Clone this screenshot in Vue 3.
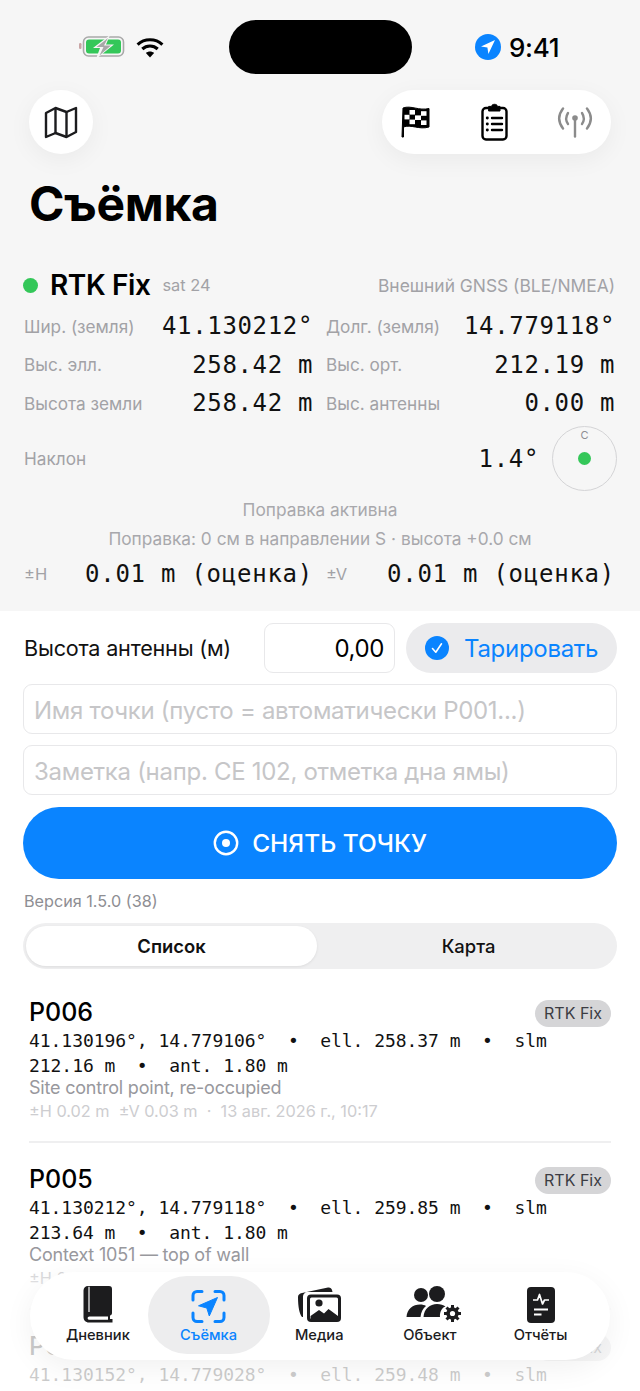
<script setup>
const rows = [
  [['Шир. (земля)', '41.130212°'], ['Долг. (земля)', '14.779118°']],
  [['Выс. элл.', '258.42 m'], ['Выс. орт.', '212.19 m']],
  [['Высота земли', '258.42 m'], ['Выс. антенны', '0.00 m']],
]
const points = [
  { name: 'P006', lines: '41.130196°, 14.779106°  •  ell. 258.37 m  •  slm 212.16 m  •  ant. 1.80 m', note: 'Site control point, re-occupied', meta: '±H 0.02 m  ±V 0.03 m  ·  13 авг. 2026 г., 10:17' },
  { name: 'P005', lines: '41.130212°, 14.779118°  •  ell. 259.85 m  •  slm 213.64 m  •  ant. 1.80 m', note: 'Context 1051 — top of wall', meta: '±H 0.02 m  ±V 0.03 m  ·  13 авг. 2026 г., 10:04' },
  { name: 'P004', lines: '41.130152°, 14.779028°  •  ell. 259.48 m  •  slm 213.27 m  •  ant. 1.80 m', note: 'Trench B — corner', meta: '±H 0.02 m  ±V 0.03 m' },
]
</script>

<template>
  <div class="page">
    <section class="top">
      <div class="status">
        <div class="status-left">
          <svg width="46" height="22" viewBox="0 0 46 22">
            <rect x="0" y="7" width="2.5" height="6" rx="1.2" fill="#c9a5a5" />
            <rect x="4.5" y="1" width="40" height="19" rx="5" fill="none" stroke="#a9a9a9" stroke-width="1.6" />
            <rect x="7" y="3.5" width="35" height="14" rx="3" fill="#34c759" />
            <path d="M31 -1 L14 12 H21 L17 23 L35 8.5 H27 Z" fill="#f6f6f6" />
            <path d="M29 2 L17.5 11 H24.5 L20.5 19.5 L32 9.5 H25 Z" fill="#a8a8a8" />
          </svg>
          <svg width="28" height="21" viewBox="0 0 28 21" fill="none" stroke="#000" stroke-width="3.1">
            <path d="M1.6 7.6 C8.4 1.2 19.6 1.2 26.4 7.6" />
            <path d="M6.3 12 C10.6 8 17.4 8 21.7 12" />
            <path d="M14 20.5 L9.9 16 C12.2 14 15.8 14 18.1 16 Z" fill="#000" stroke="none" />
          </svg>
        </div>
        <div class="island"></div>
        <div class="status-right">
          <svg width="26" height="26" viewBox="0 0 26 26">
            <circle cx="13" cy="13" r="13" fill="#0a84ff" />
            <path d="M20 6 L6 12.6 L12.4 13.6 L13.4 20 Z" fill="#fff" />
          </svg>
          <span class="time">9:41</span>
        </div>
      </div>

      <div class="toolbar">
        <button class="round">
          <svg width="34" height="33" viewBox="0 0 34 33" fill="none" stroke="#1c1c1e" stroke-width="2.4" stroke-linejoin="round">
            <path d="M2 7 L11.5 2 L22.5 6 L32 2 V26 L22.5 31 L11.5 27 L2 31 Z" />
            <path d="M11.5 2 V27 M22.5 6 V31" />
          </svg>
        </button>
        <div class="pill">
          <svg width="30" height="32" viewBox="0 0 30 32">
            <path d="M2 2 C10 -1 18 5 28 2.5 V21 C18 24 10 18 2.5 21 V31 H1 Z" fill="#000" stroke="#000" stroke-width="1" />
            <g fill="#fff">
              <rect x="8.5" y="4" width="5.5" height="4.6" />
              <rect x="20" y="5.2" width="5.5" height="4.6" />
              <rect x="3.5" y="8.8" width="5" height="4.6" />
              <rect x="14" y="9.4" width="6" height="4.6" />
              <rect x="8.5" y="13.6" width="5.5" height="4.6" />
              <rect x="20" y="14.4" width="5.5" height="4.6" />
            </g>
          </svg>
          <svg width="27" height="38" viewBox="0 0 27 38" fill="none" stroke="#000" stroke-width="2.4" stroke-linecap="round">
            <rect x="1.5" y="5" width="24" height="31.5" rx="3.5" />
            <path d="M8 3.4 H10.5 C10.8 0.6 16.2 0.6 16.5 3.4 H19 V8 H8 Z" fill="#000" stroke-width="1" />
            <path d="M11 15 H21 M11 21 H21 M11 27 H21" />
            <path d="M6.2 15 H6.4 M6.2 21 H6.4 M6.2 27 H6.4" stroke-width="2.8" />
          </svg>
          <svg width="36" height="31" viewBox="0 0 36 31" fill="none" stroke="#8b8b8b" stroke-width="2.4" stroke-linecap="round">
            <path d="M6 1.5 C1 8 1 15 6 21.5 M30 1.5 C35 8 35 15 30 21.5" />
            <path d="M11 6 C8.5 10 8.5 13.5 11 17 M25 6 C27.5 10 27.5 13.5 25 17" />
            <path d="M18 11 V29.5" />
            <circle cx="18" cy="11" r="2.8" fill="#8b8b8b" stroke="none" />
          </svg>
        </div>
      </div>

      <h1 class="title">Съёмка</h1>

      <div class="fix-row">
        <span class="dot"></span>
        <span class="fix">RTK Fix</span>
        <span class="sat">sat 24</span>
        <span class="source">Внешний GNSS (BLE/NMEA)</span>
      </div>

      <div class="grid">
        <template v-for="(row, i) in rows" :key="i">
          <div v-for="cell in row" :key="cell[0]" class="cell">
            <span class="label">{{ cell[0] }}</span>
            <span class="mono">{{ cell[1] }}</span>
          </div>
        </template>
      </div>

      <div class="tilt">
        <span class="label">Наклон</span>
        <span class="mono tilt-val">1.4°</span>
        <div class="bubble">
          <span class="north">С</span>
          <span class="bubble-dot"></span>
        </div>
      </div>

      <p class="center first">Поправка активна</p>
      <p class="center second">Поправка: 0 см в направлении S · высота +0.0 см</p>

      <div class="grid acc">
        <div class="cell"><span class="label small">±H</span><span class="mono">0.01 m (оценка)</span></div>
        <div class="cell"><span class="label small">±V</span><span class="mono">0.01 m (оценка)</span></div>
      </div>
    </section>

    <section class="form">
      <div class="ant-row">
        <span class="ant-label">Высота антенны (м)</span>
        <div class="ant-input">0,00</div>
        <button class="tare">
          <svg width="24" height="24" viewBox="0 0 24 24">
            <circle cx="12" cy="12" r="12" fill="#0a84ff" />
            <path d="M7.5 12.5 L10.8 16.2 L16.5 7.8" fill="none" stroke="#fff" stroke-width="1.6" stroke-linecap="round" stroke-linejoin="round" />
          </svg>
          <span>Тарировать</span>
        </button>
      </div>
      <div class="field">Имя точки (пусто = автоматически P001...)</div>
      <div class="field">Заметка (напр. CE 102, отметка дна ямы)</div>
      <button class="shoot">
        <svg width="26" height="26" viewBox="0 0 26 26">
          <circle cx="13" cy="13" r="11.2" fill="none" stroke="#fff" stroke-width="2.4" />
          <circle cx="13" cy="13" r="4" fill="#fff" />
        </svg>
        <span>СНЯТЬ ТОЧКУ</span>
      </button>
      <p class="version">Версия 1.5.0 (38)</p>
      <div class="segment">
        <div class="seg on">Список</div>
        <div class="seg off">Карта</div>
      </div>
    </section>

    <section class="list">
      <article v-for="p in points" :key="p.name" class="point">
        <div class="point-head">
          <span class="point-name">{{ p.name }}</span>
          <span class="badge">RTK Fix</span>
        </div>
        <p class="point-mono">{{ p.lines }}</p>
        <p class="point-note">{{ p.note }}</p>
        <p class="point-meta">{{ p.meta }}</p>
      </article>
    </section>

    <div class="fade"></div>

    <nav class="tabbar">
      <div class="tab">
        <svg width="30" height="37" viewBox="0 0 30 37">
          <path d="M5 0 H26 C28 0 29 1 29 3 V27 C29 28.5 28 29 27 29.6 V33 H29.5 V36.5 H6 C2.5 36.5 0.5 34 0.5 31 V4.5 C0.5 2 2.5 0 5 0 Z" fill="#1c1c1e" />
          <path d="M6 0.8 V26" stroke="#fff" stroke-width="1.2" />
          <path d="M6.5 30.5 H25 V33.8 H6.5 C4 33.8 4 30.5 6.5 30.5 Z" fill="#fff" />
        </svg>
        <span>Дневник</span>
      </div>
      <div class="tab active">
        <svg width="35" height="33" viewBox="0 0 35 33">
          <path d="M2 10 V5.5 C2 3.3 3.8 1.5 6 1.5 H11 M24 1.5 H29 C31.2 1.5 33 3.3 33 5.5 V10 M33 23 V27.5 C33 29.7 31.2 31.5 29 31.5 H24 M11 31.5 H6 C3.8 31.5 2 29.7 2 27.5 V23" fill="none" stroke="#0a84ff" stroke-width="3" stroke-linecap="round" />
          <path d="M26.5 7.5 L7.5 15.8 L15.8 18 L18.3 26 Z" fill="#0a84ff" stroke="#0a84ff" stroke-width="1" stroke-linejoin="round" />
        </svg>
        <span>Съёмка</span>
      </div>
      <div class="tab">
        <svg class="photos" width="44" height="36" viewBox="0 0 44 36">
          <path d="M4 6 L30 0.5 C32 0.2 33.5 1 34 3 L34.5 5 H10 C7 5 5 7 5 10 V30 H4 C1.5 27 0 20 0 10 C0 8 1.5 6.5 4 6 Z" fill="#1c1c1e" />
          <rect x="9" y="7.5" width="34" height="27.5" rx="4" fill="#1c1c1e" />
          <rect x="12" y="10.5" width="28" height="21.5" rx="1.5" fill="#fff" />
          <circle cx="21" cy="16" r="3.6" fill="#1c1c1e" />
          <path d="M12.5 32 L12.5 29 L21 23 L26 26.5 L30.5 22 L40 29 V32 Z" fill="#1c1c1e" />
        </svg>
        <span>Медиа</span>
      </div>
      <div class="tab">
        <svg class="people" width="56" height="37" viewBox="0 0 56 37">
          <circle cx="15" cy="9" r="7" fill="#1c1c1e" />
          <circle cx="31" cy="8" r="8" fill="#1c1c1e" />
          <path d="M0.5 31 C1 23 7 18.5 14 18.5 C16.5 18.5 18.5 19 20 20 C17 22.5 15 26 14.5 31 Z" fill="#1c1c1e" />
          <path d="M17.5 31 C18 23 24 18 31 18 C34.5 18 37.5 19 39.5 20.5 C36 21.5 33.5 26 34 31 Z" fill="#1c1c1e" />
          <path d="M46.5 19 V36 M38 27.5 H55 M40.5 21.5 L52.5 33.5 M52.5 21.5 L40.5 33.5" stroke="#1c1c1e" stroke-width="3" />
          <circle cx="46.5" cy="27.5" r="6.2" fill="#1c1c1e" />
          <circle cx="46.5" cy="27.5" r="2.6" fill="#fff" />
        </svg>
        <span>Объект</span>
      </div>
      <div class="tab">
        <svg width="28" height="36" viewBox="0 0 28 36">
          <rect x="0" y="0" width="28" height="36" rx="4" fill="#1c1c1e" />
          <path d="M6 13 H10.5 L12.5 7.5 L15.5 17 L17.5 13 H22" fill="none" stroke="#fff" stroke-width="1.7" stroke-linejoin="round" />
          <path d="M7 22.5 H21 M7 27.5 H14.5" stroke="#fff" stroke-width="1.9" />
        </svg>
        <span>Отчёты</span>
      </div>
    </nav>
  </div>
</template>

<style scoped>
.page {
  position: relative;
  width: 640px;
  height: 1391px;
  overflow: hidden;
  background: #fff;
  font-family: Inter, "Noto Sans", sans-serif;
  color: #000;
}
p, h1 { margin: 0; }
button { border: 0; padding: 0; font-family: inherit; }

.top {
  height: 611px;
  background: #f6f6f6;
  padding-top: 20px;
  box-sizing: border-box;
}
.status {
  display: flex;
  align-items: center;
  height: 54px;
}
.status-left {
  width: 229px;
  box-sizing: border-box;
  display: flex;
  justify-content: flex-end;
  align-items: center;
  gap: 11px;
  padding-right: 65px;
}
.island {
  width: 183px;
  height: 54px;
  background: #000;
  border-radius: 27px;
}
.status-right {
  display: flex;
  align-items: center;
  gap: 8px;
  margin-left: 63px;
}
.time {
  font-size: 26px;
  font-weight: 550;
  letter-spacing: -0.3px;
}

.toolbar {
  display: flex;
  justify-content: space-between;
  padding: 16px 29px 0;
}
.round {
  width: 64px;
  height: 64px;
  border-radius: 50%;
  background: #fff;
  display: flex;
  align-items: center;
  justify-content: center;
  box-shadow: 0 6px 24px rgba(0, 0, 0, 0.05);
}
.pill {
  width: 229px;
  height: 64px;
  box-sizing: border-box;
  border-radius: 32px;
  background: #fff;
  display: flex;
  align-items: center;
  justify-content: space-between;
  padding: 0 18px 0 19px;
  box-shadow: 0 6px 24px rgba(0, 0, 0, 0.05);
}
.title {
  margin: 23px 0 0 29px;
  font-size: 48px;
  line-height: 54px;
  font-weight: 700;
  letter-spacing: -0.3px;
}

.fix-row {
  display: flex;
  align-items: center;
  margin-top: 36px;
  padding: 0 25px 0 23px;
  height: 36px;
}
.dot {
  width: 15px;
  height: 15px;
  border-radius: 50%;
  background: #34c759;
}
.fix {
  margin-left: 12px;
  font-size: 28px;
  font-weight: 600;
  letter-spacing: -0.4px;
}
.sat {
  margin-left: 12px;
  font-size: 16.4px;
  color: #a2a2a6;
}
.source {
  margin-left: auto;
  font-size: 17.4px;
  color: #a2a2a6;
}

.grid {
  display: grid;
  grid-template-columns: 289px 289px;
  column-gap: 13px;
  padding-left: 24px;
  margin-top: 4px;
}
.cell {
  display: flex;
  justify-content: space-between;
  align-items: center;
  height: 38.5px;
}
.label {
  font-size: 17.2px;
  color: #a2a2a6;
}
.label.small { font-size: 16.5px; }
.mono {
  font-family: "DejaVu Sans Mono", "Liberation Mono", monospace;
  font-size: 24px;
  letter-spacing: 0.65px;
  color: #111;
  white-space: pre;
}

.tilt {
  display: flex;
  align-items: center;
  padding: 0 23px 0 24px;
  height: 64px;
  margin-top: 4px;
}
.tilt-val { margin-left: auto; margin-right: 13px; }
.bubble {
  position: relative;
  width: 63px;
  height: 63px;
  border: 1px solid #d4d4d6;
  border-radius: 50%;
  display: flex;
  align-items: center;
  justify-content: center;
}
.north {
  position: absolute;
  top: 1px;
  left: 0;
  right: 0;
  text-align: center;
  font-size: 11px;
  color: #8e8e93;
}
.bubble-dot {
  width: 13px;
  height: 13px;
  border-radius: 50%;
  background: #34c759;
}
.center {
  text-align: center;
  font-size: 17.3px;
  color: #a8a8ac;
  line-height: 22px;
}
.first { margin-top: 8px; }
.second { margin-top: 7.5px; }
.grid.acc { margin-top: 5px; }
.acc .mono { letter-spacing: 0.75px; }

.form {
  padding: 12px 23px 0;
  display: flex;
  flex-direction: column;
}
.ant-row {
  display: flex;
  align-items: center;
  height: 50px;
}
.ant-label {
  width: 241px;
  padding-left: 1px;
  box-sizing: border-box;
  font-size: 21.6px;
  letter-spacing: -0.2px;
  color: #111;
  white-space: nowrap;
}
.ant-input {
  width: 131px;
  height: 50px;
  box-sizing: border-box;
  border: 1px solid #e8e8ea;
  border-radius: 9px;
  background: #fff;
  font-size: 24px;
  line-height: 50px;
  text-align: right;
  padding-right: 10px;
  letter-spacing: -0.4px;
}
.tare {
  margin-left: 11px;
  width: 211px;
  height: 50px;
  border-radius: 25px;
  background: #ebebed;
  display: flex;
  align-items: center;
  gap: 15px;
  padding-left: 19px;
  box-sizing: border-box;
  font-size: 24px;
  color: #0a84ff;
  letter-spacing: -0.3px;
}
.field {
  margin-top: 11px;
  height: 50px;
  box-sizing: border-box;
  border: 1px solid #e8e8ea;
  border-radius: 9px;
  font-size: 24px;
  line-height: 51px;
  padding-left: 10px;
  color: #c6c6c8;
  letter-spacing: -0.3px;
  white-space: nowrap;
}
.shoot {
  margin-top: 12px;
  height: 72px;
  border-radius: 36px;
  background: #0a84ff;
  color: #fff;
  display: flex;
  align-items: center;
  justify-content: center;
  gap: 13px;
  font-size: 24.5px;
  font-weight: 500;
}
.version {
  margin-top: 13px;
  padding-left: 1px;
  font-size: 16.2px;
  line-height: 18px;
  color: #8e8e93;
}
.segment {
  margin-top: 13px;
  height: 46px;
  border-radius: 23px;
  background: #efeff0;
  padding: 3px;
  box-sizing: border-box;
  display: grid;
  grid-template-columns: 291px 1fr;
}
.seg {
  text-align: center;
  line-height: 40px;
  font-size: 18.4px;
  font-weight: 500;
  color: #111;
}
.seg.off { padding-left: 6px; font-weight: 450; }
.seg.on {
  background: #fff;
  border-radius: 20px;
  font-weight: 600;
  box-shadow: 0 1px 3px rgba(0, 0, 0, 0.08);
}

.list {
  padding: 0 29px 0 29px;
  margin-top: 29px;
}
.point {
  height: 167px;
  border-bottom: 2px solid #efeff0;
  box-sizing: border-box;
  padding-top: 22px;
}
.point:first-child {
  height: 145px;
  padding-top: 0;
}
.point-head {
  display: flex;
  justify-content: space-between;
  align-items: flex-start;
  height: 28px;
}
.point-name {
  font-size: 25px;
  line-height: 28px;
  font-weight: 500;
}
.badge {
  margin-top: 2px;
  width: 76px;
  height: 27px;
  text-align: center;
  line-height: 27px;
  border-radius: 14px;
  background: #d5d5d7;
  font-size: 16px;
  color: #3c3c43;
}
.point-mono {
  margin-top: 2px;
  font-family: "DejaVu Sans Mono", "Liberation Mono", monospace;
  font-size: 18px;
  line-height: 25px;
  letter-spacing: -0.05px;
  white-space: pre-wrap;
  color: #111;
}
.point-note {
  margin-top: -2px;
  font-size: 18px;
  line-height: 23px;
  color: #98989d;
  letter-spacing: -0.2px;
}
.point-meta {
  margin-top: 1px;
  font-size: 16.3px;
  line-height: 23px;
  color: #cdcdd0;
  white-space: pre;
}

.fade {
  position: absolute;
  left: 0;
  right: 0;
  bottom: 0;
  height: 130px;
  background: linear-gradient(rgba(255, 255, 255, 0), rgba(255, 255, 255, 0.8) 35%, rgba(255, 255, 255, 0.78));
}
.tabbar {
  position: absolute;
  left: 30px;
  top: 1272px;
  width: 580px;
  height: 88px;
  box-sizing: border-box;
  border-radius: 44px;
  background: #fff;
  box-shadow: 0 8px 30px rgba(0, 0, 0, 0.06);
  display: grid;
  grid-template-columns: repeat(5, 110.7px);
  padding-left: 12.5px;
}
.tab {
  position: relative;
  display: flex;
  flex-direction: column;
  align-items: center;
  justify-content: flex-end;
  height: 72px;
  gap: 3px;
  font-size: 14.7px;
  font-weight: 450;
  color: #1c1c1e;
  white-space: nowrap;
}
.tab > * { position: relative; }
.tab svg { flex: none; }
.tab svg.photos { margin-left: 2px; }
.tab svg.people { margin-left: 9px; }
.tab.active { color: #0a84ff; }
.tab.active::before {
  content: "";
  position: absolute;
  left: -5px;
  right: -6px;
  top: 4px;
  height: 78px;
  border-radius: 39px;
  background: #ededee;
}
</style>
